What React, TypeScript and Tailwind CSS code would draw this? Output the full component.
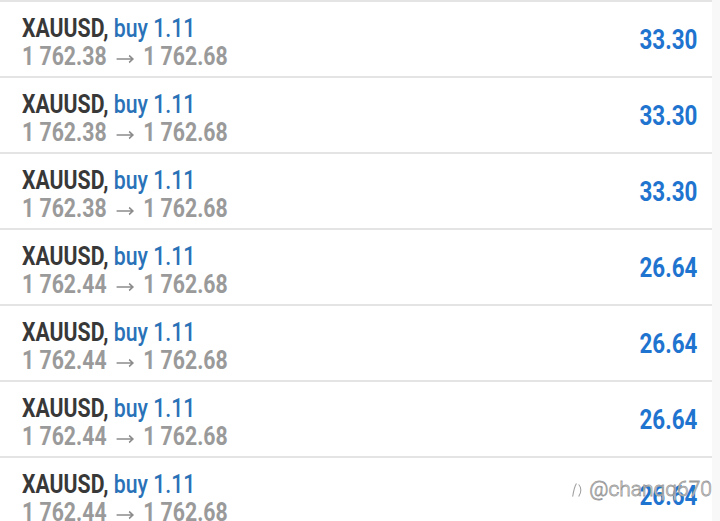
import React from "react";

type Trade = { open: string; close: string; profit: string };

const trades: Trade[] = [
  { open: "1 762.38", close: "1 762.68", profit: "33.30" },
  { open: "1 762.38", close: "1 762.68", profit: "33.30" },
  { open: "1 762.38", close: "1 762.68", profit: "33.30" },
  { open: "1 762.44", close: "1 762.68", profit: "26.64" },
  { open: "1 762.44", close: "1 762.68", profit: "26.64" },
  { open: "1 762.44", close: "1 762.68", profit: "26.64" },
  { open: "1 762.44", close: "1 762.68", profit: "26.64" },
];

function Arrow() {
  return (
    <svg
      viewBox="0 0 21 10"
      className="mx-[11px] inline-block h-[10px] w-[21px] align-[1px]"
      fill="none"
      stroke="#8c8c8c"
      strokeWidth="1.6"
    >
      <path d="M0 5h19M15 1.5 19.5 5 15 8.5" />
    </svg>
  );
}

function TradeRow({ t }: { t: Trade }) {
  return (
    <div className="flex h-[76px] shrink-0 items-center border-t-2 border-[#e4e4e4] pr-[15px]">
      <div className="flex min-w-0 flex-1 flex-col pl-[22px] pt-[8px]">
        <div className="origin-left scale-x-[0.85] whitespace-nowrap text-[25px] leading-[28px]">
          <span className="font-bold text-[#383838]">XAUUSD,</span>
          <span className="font-medium text-[#2a72b8]"> buy 1.11</span>
        </div>
        <div className="origin-left scale-x-[0.85] whitespace-nowrap text-[25px] leading-[28px] font-bold text-[#9a9a9a]">
          {t.open}
          <Arrow />
          {t.close}
        </div>
      </div>
      <div className="origin-right scale-x-[0.8] pt-[2px] text-[28px] font-bold leading-[32px] text-[#1f74cf]">
        {t.profit}
      </div>
    </div>
  );
}

export default function App() {
  return (
    <div
      className="relative flex h-[521px] w-[720px] overflow-hidden bg-white"
      style={{ fontFamily: "Roboto, 'Noto Sans', sans-serif" }}
    >
      <div className="flex w-[712px] flex-col">
        {trades.map((t, i) => (
          <TradeRow key={i} t={t} />
        ))}
      </div>
      <div className="w-[8px] bg-[#f8f8f8]" />

      {/* watermark */}
      <div className="absolute right-[8px] top-[474px] flex items-center gap-[4px] text-[21px] font-light text-white [-webkit-text-stroke:0.8px_#9a9a9a]">
        <svg viewBox="0 0 16 20" className="h-[20px] w-[14px]" fill="none" stroke="#a0a0a0" strokeWidth="1.2">
          <path d="M6 3c-2 3-3 8-4 14M9 4c3 3 3 9 0 13" strokeLinecap="round" />
        </svg>
        <span>@chanqq670</span>
      </div>
    </div>
  );
}
